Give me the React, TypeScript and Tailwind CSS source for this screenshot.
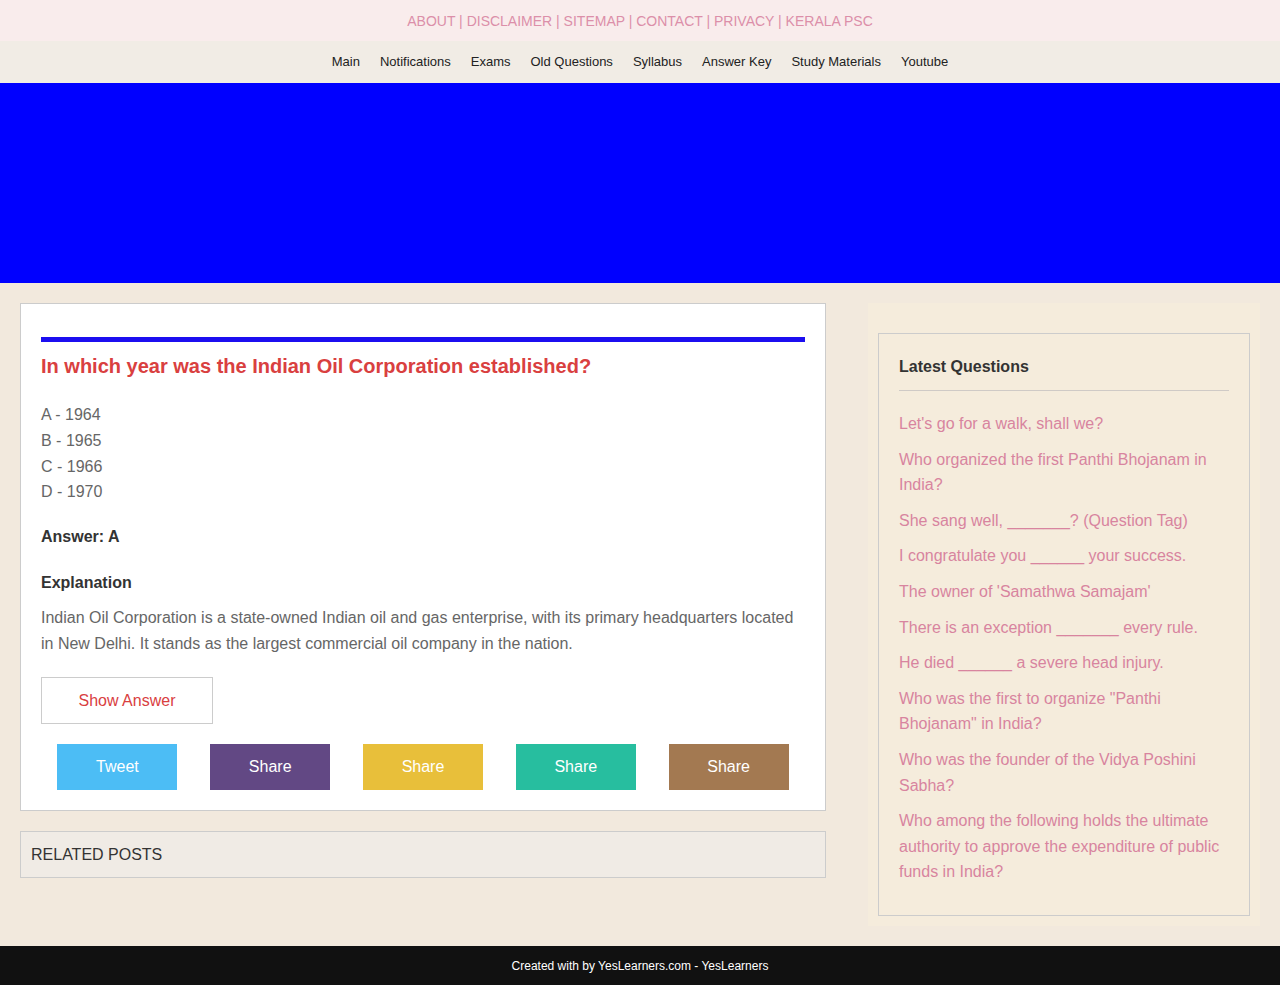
import React from "react";

const latest: string[] = [
  "Let's go for a walk, shall we?",
  "Who organized the first Panthi Bhojanam in India?",
  "She sang well, _______? (Question Tag)",
  "I congratulate you ______ your success.",
  "The owner of 'Samathwa Samajam'",
  "There is an exception _______ every rule.",
  "He died ______ a severe head injury.",
  'Who was the first to organize "Panthi Bhojanam" in India?',
  "Who was the founder of the Vidya Poshini Sabha?",
  "Who among the following holds the ultimate authority to approve the expenditure of public funds in India?",
];

const navItems = ["Main", "Notifications", "Exams", "Old Questions", "Syllabus", "Answer Key", "Study Materials", "Youtube"];

const shares = [
  { label: "Tweet", cls: "bg-[#4cbdf5]" },
  { label: "Share", cls: "bg-[#624884]" },
  { label: "Share", cls: "bg-[#e8bf3a]" },
  { label: "Share", cls: "bg-[#27be9f]" },
  { label: "Share", cls: "bg-[#a37951]" },
];

export default function App() {
  return (
    <div className="min-h-[985px] bg-[#f2e9dd] font-['Liberation_Sans',Arial,sans-serif] flex flex-col">
      <div className="h-[41px] pt-[2px] bg-[#f9ecec] flex items-center justify-center text-[14px] text-[#dc8fa9]">
        ABOUT | DISCLAIMER | SITEMAP | CONTACT | PRIVACY | KERALA PSC
      </div>
      <div className="h-[42px] bg-[#f1ece5] flex items-center justify-center gap-[20px] text-[13px] text-[#222]">
        {navItems.map((n) => (
          <span key={n}>{n}</span>
        ))}
      </div>
      <div className="h-[200px] bg-[#0000ff]" />

      <div className="flex-1 flex items-start px-[20px] pt-[20px] pb-[20px] gap-[42px]">
        <div className="w-[806px] flex flex-col gap-[20px]">
          <div className="bg-white border border-[#cccccc] px-[20px] pt-[33px] pb-[20px]">
            <div className="h-[5px] bg-[#1c0ef0]" />
            <h1 className="mt-[12px] text-[20px] leading-[24px] font-bold text-[#d9403f]">
              In which year was the Indian Oil Corporation established?
            </h1>
            <div className="mt-[24px] text-[16px] leading-[25.75px] text-[#666]">
              <div>A - 1964</div>
              <div>B - 1965</div>
              <div>C - 1966</div>
              <div>D - 1970</div>
            </div>
            <div className="mt-[19px] text-[16px] leading-[26px] font-bold text-[#333]">Answer: A</div>
            <div className="mt-[20px] text-[16px] leading-[26px] font-bold text-[#333]">Explanation</div>
            <p className="mt-[9px] text-[16px] leading-[26px] text-[#666]">
              Indian Oil Corporation is a state-owned Indian oil and gas enterprise, with its primary headquarters located in New Delhi. It stands as the largest commercial oil company in the nation.
            </p>
            <button className="mt-[20px] w-[172px] h-[47px] border border-[#cccccc] bg-white text-[16px] text-[#d9403f]">
              Show Answer
            </button>
            <div className="mt-[20px] flex justify-around">
              {shares.map((s, i) => (
                <div key={i} className={`w-[120px] h-[46px] flex items-center justify-center text-white text-[16px] ${s.cls}`}>
                  {s.label}
                </div>
              ))}
            </div>
          </div>
          <div className="h-[47px] bg-[#f0ebe5] border border-[#cccccc] flex items-center px-[10px] text-[16px] text-[#333] uppercase">
            Related Posts
          </div>
        </div>

        <div className="w-[392px] bg-[#f5ecdc] p-[10px] pt-[30px]">
          <div className="border border-[#cccccc] px-[20px] pt-[20px] pb-[30px]">
            <h2 className="text-[16px] leading-[26px] font-bold text-[#333]">Latest Questions</h2>
            <div className="mt-[10px] h-px bg-[#cfcac6]" />
            <ul className="mt-[20px] flex flex-col gap-[10px]">
              {latest.map((q) => (
                <li key={q} className="text-[16px] leading-[25.6px] text-[#d8849f]">
                  {q}
                </li>
              ))}
            </ul>
          </div>
        </div>
      </div>

      <div className="h-[39px] bg-[#111111] flex items-center justify-center text-[12px] text-white">
        Created with by YesLearners.com - YesLearners
      </div>
    </div>
  );
}
